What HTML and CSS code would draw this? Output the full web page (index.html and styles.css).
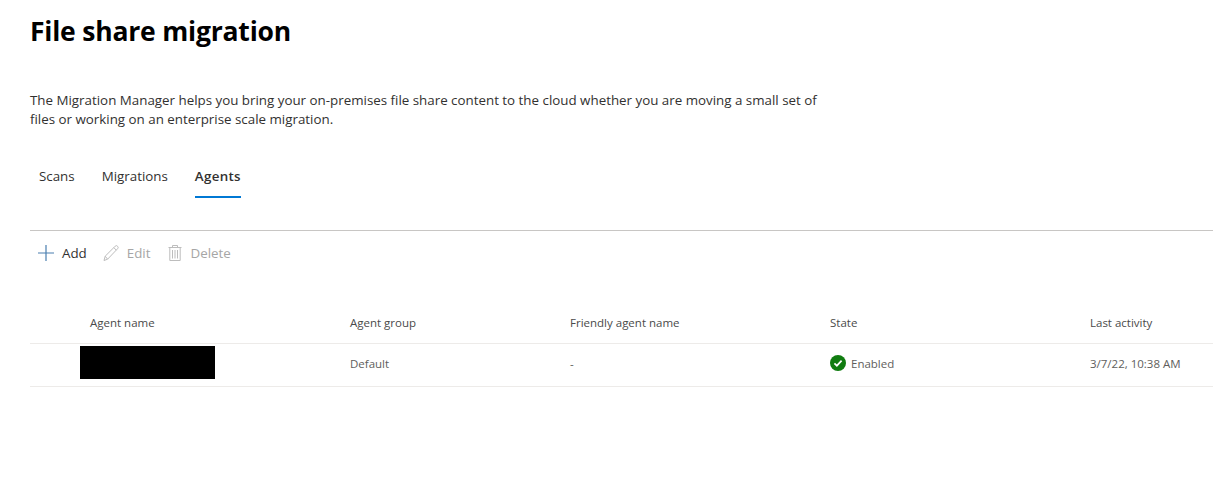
FILE: index.html
```html
<!DOCTYPE html>
<html lang="en">
<head>
<meta charset="utf-8">
<title>File share migration</title>
<link rel="stylesheet" href="styles.css">
</head>
<body>
<main class="page">
  <h1 class="title">File share migration</h1>
  <p class="intro">The Migration Manager helps you bring your on-premises file share content to the cloud whether you are moving a small set of files or working on an enterprise scale migration.</p>
  <nav class="tabs">
    <a class="tab">Scans</a>
    <a class="tab">Migrations</a>
    <a class="tab active">Agents</a>
  </nav>
  <div class="toolbar">
    <button class="cmd">
      <svg width="18" height="18" viewBox="0 0 18 18"><path d="M9 1v16M1 9h16" stroke="#4a7fb0" stroke-width="1.2" fill="none"/></svg>
      <span>Add</span>
    </button>
    <button class="cmd off">
      <svg width="18" height="18" viewBox="0 0 18 18"><path d="M2 16.500l1.200-4.300L13.200 2.200a1.600 1.600 0 0 1 2.400 0.100 1.700 1.700 0 0 1 0 2.400L5.600 15.200zM3.200 12.200l2.400 3M11.800 3.600l2.500 2.600" stroke="#bdbdbd" stroke-width="1" fill="none"/></svg>
      <span>Edit</span>
    </button>
    <button class="cmd off">
      <svg width="16" height="18" viewBox="0 0 16 18"><path d="M1.500 3.500h13M5.500 3.500V1.500h5v2M2.800 3.500v13h10.400v-13M5.500 6v8.500M8 6v8.500M10.500 6v8.500" stroke="#bdbdbd" stroke-width="1" fill="none"/></svg>
      <span>Delete</span>
    </button>
  </div>
  <div class="grid head">
    <div class="cell">Agent name</div>
    <div class="cell">Agent group</div>
    <div class="cell">Friendly agent name</div>
    <div class="cell">State</div>
    <div class="cell">Last activity</div>
  </div>
  <div class="grid row">
    <div class="cell"><div class="redacted"></div></div>
    <div class="cell">Default</div>
    <div class="cell">-</div>
    <div class="cell state">
      <svg width="16" height="16" viewBox="0 0 16 16"><circle cx="8" cy="8" r="8" fill="#107c10"/><path d="M4.400 8.300l2.500 2.400 4.700-5" stroke="#fff" stroke-width="1.700" fill="none"/></svg>
      <span>Enabled</span>
    </div>
    <div class="cell">3/7/22, 10:38 AM</div>
  </div>
</main>
</body>
</html>
```
FILE: styles.css
```css
* { box-sizing: border-box; }
html, body { margin: 0; padding: 0; background: #fff; }
body { font-family: "Open Sans", "Noto Sans", sans-serif; color: #323130; }
.page { padding: 0 0 0 30px; height: 488px; overflow: hidden; }
.title { margin: 0; padding-top: 12px; font-size: 26.5px; line-height: 38px; font-weight: 700; color: #000; letter-spacing: -0.2px; }
.intro { margin: 41px 0 0; width: 800px; font-size: 13.35px; line-height: 19px; }
.tabs { display: flex; gap: 27px; margin-top: 27px; padding-left: 9px; height: 75px; border-bottom: 1px solid #c8c6c4; align-items: flex-start; }
.tab { font-size: 13.35px; line-height: 40px; height: 42px; }
.tab.active { font-weight: 600; letter-spacing: 0.3px; border-bottom: 2px solid #0078d4; }
.toolbar { display: flex; gap: 15px; height: 44px; padding-left: 7px; align-items: center; }
.cmd { display: flex; align-items: center; gap: 7px; padding: 0; border: 0; background: none; font: inherit; font-size: 13.35px; color: #323130; }
.cmd.off { color: #a6a6a6; }
.cmd.off + .cmd.off { margin-left: 2px; }
.grid { display: grid; grid-template-columns: 260px 220px 260px 260px 1fr; padding-left: 60px; font-size: 11.5px; align-items: center; }
.head { margin-top: 24px; height: 45px; padding-top: 3px; border-bottom: 1px solid #edebe9; }
.row { height: 43px; padding-bottom: 4px; border-bottom: 1px solid #edebe9; color: #605e5c; }
.head .cell { color: #4a4a4a; }
.redacted { width: 135px; height: 33px; background: #000; margin: -2px 0 0 -10px; }
.state { display: flex; align-items: center; gap: 5px; }
```
